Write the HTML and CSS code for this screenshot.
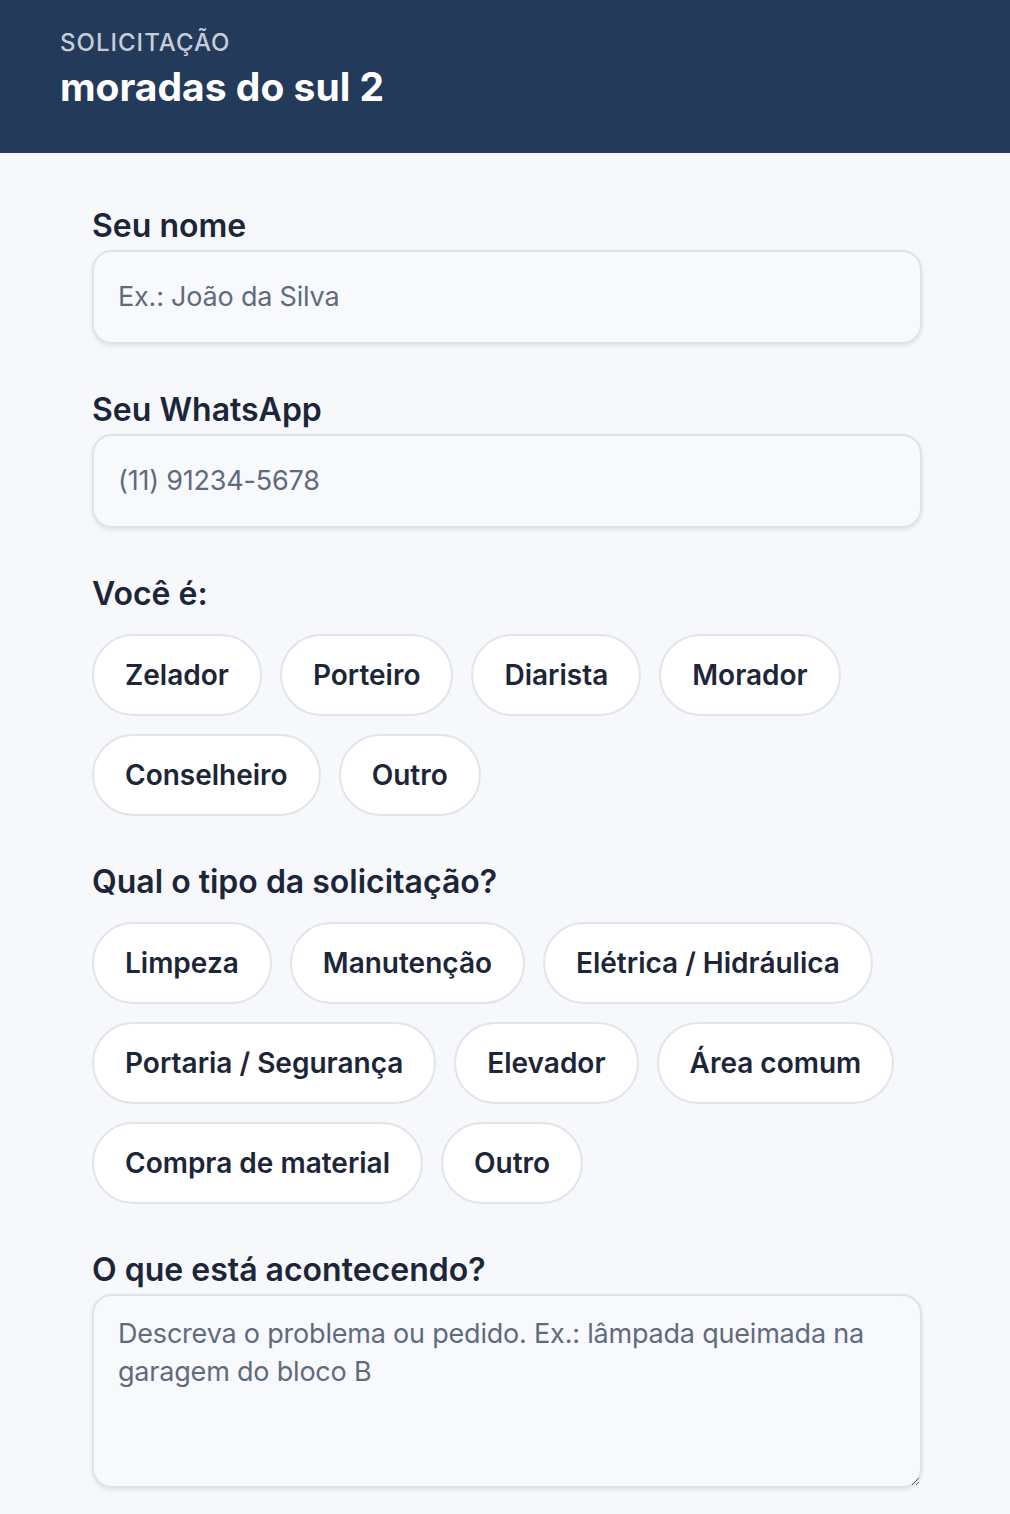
FILE: index.html
```html
<!DOCTYPE html>
<html lang="pt-BR">
<head>
    <meta charset="UTF-8">
    <meta name="viewport" content="width=device-width, initial-scale=1.0">
    <title>Solicitação - moradas do sul 2</title>
    <link rel="stylesheet" href="styles.css">
</head>
<body>
    <header class="topo">
        <div class="topo-sub">SOLICITAÇÃO</div>
        <h1 class="topo-titulo">moradas do sul 2</h1>
    </header>

    <form class="form">
        <div class="campo">
            <label class="rotulo" for="nome">Seu nome</label>
            <input class="entrada" type="text" id="nome" placeholder="Ex.: João da Silva">
        </div>

        <div class="campo">
            <label class="rotulo" for="whats">Seu WhatsApp</label>
            <input class="entrada" type="tel" id="whats" placeholder="(11) 91234-5678">
        </div>

        <div class="campo">
            <div class="rotulo rotulo-grupo">Você é:</div>
            <div class="opcoes">
                <button type="button" class="chip">Zelador</button>
                <button type="button" class="chip">Porteiro</button>
                <button type="button" class="chip">Diarista</button>
                <button type="button" class="chip">Morador</button>
                <button type="button" class="chip">Conselheiro</button>
                <button type="button" class="chip">Outro</button>
            </div>
        </div>

        <div class="campo">
            <div class="rotulo rotulo-grupo">Qual o tipo da solicitação?</div>
            <div class="opcoes">
                <button type="button" class="chip">Limpeza</button>
                <button type="button" class="chip">Manutenção</button>
                <button type="button" class="chip">Elétrica / Hidráulica</button>
                <button type="button" class="chip">Portaria / Segurança</button>
                <button type="button" class="chip">Elevador</button>
                <button type="button" class="chip">Área comum</button>
                <button type="button" class="chip">Compra de material</button>
                <button type="button" class="chip">Outro</button>
            </div>
        </div>

        <div class="campo">
            <label class="rotulo" for="desc">O que está acontecendo?</label>
            <textarea class="entrada texto" id="desc" placeholder="Descreva o problema ou pedido. Ex.: lâmpada queimada na garagem do bloco B"></textarea>
        </div>
    </form>
</body>
</html>
```

FILE: styles.css
```css
body {
    margin: 0;
    font-family: Inter, "Noto Sans", sans-serif;
    background-color: #f7f8fb;
    color: #1c2638;
}
.topo {
    background-color: #243a5a;
    padding: 28px 60px 43px;
}
.topo-sub {
    color: #c6cdd8;
    font-size: 24px;
    font-weight: 500;
    letter-spacing: 1px;
    line-height: 30px;
}
.topo-titulo {
    color: #fff;
    margin: 6px 0 0;
    font-size: 39px;
    font-weight: 700;
    line-height: 46px;
}
.form {
    margin: 0 88px 0 92px;
    padding-top: 53px;
}
.campo {
    margin-bottom: 46px;
}
.rotulo {
    display: block;
    font-size: 32px;
    font-weight: 600;
    line-height: 40px;
    margin-bottom: 4px;
    color: #1c2638;
}
.rotulo-grupo {
    margin-bottom: 20px;
}
.entrada {
    display: block;
    box-sizing: border-box;
    width: 100%;
    padding: 26px 24px;
    font-family: inherit;
    font-size: 27px;
    letter-spacing: -0.2px;
    line-height: 38px;
    color: #1c2638;
    background-color: #f8f9fc;
    border: 2px solid #dfe3e9;
    border-radius: 20px;
    box-shadow: 0 2px 4px rgba(30, 41, 59, 0.1);
    outline: none;
}
.entrada::placeholder {
    color: #5f6b7d;
}
.texto {
    height: 194px;
    padding: 19px 24px;
    line-height: 38px;
    resize: vertical;
}
.opcoes {
    display: flex;
    flex-wrap: wrap;
    gap: 18px;
}
.chip {
    height: 82px;
    padding: 0 31px;
    font-family: inherit;
    font-size: 28px;
    font-weight: 600;
    color: #1c2638;
    background-color: #fff;
    border: 2px solid #e1e5eb;
    border-radius: 41px;
    cursor: pointer;
}
```
